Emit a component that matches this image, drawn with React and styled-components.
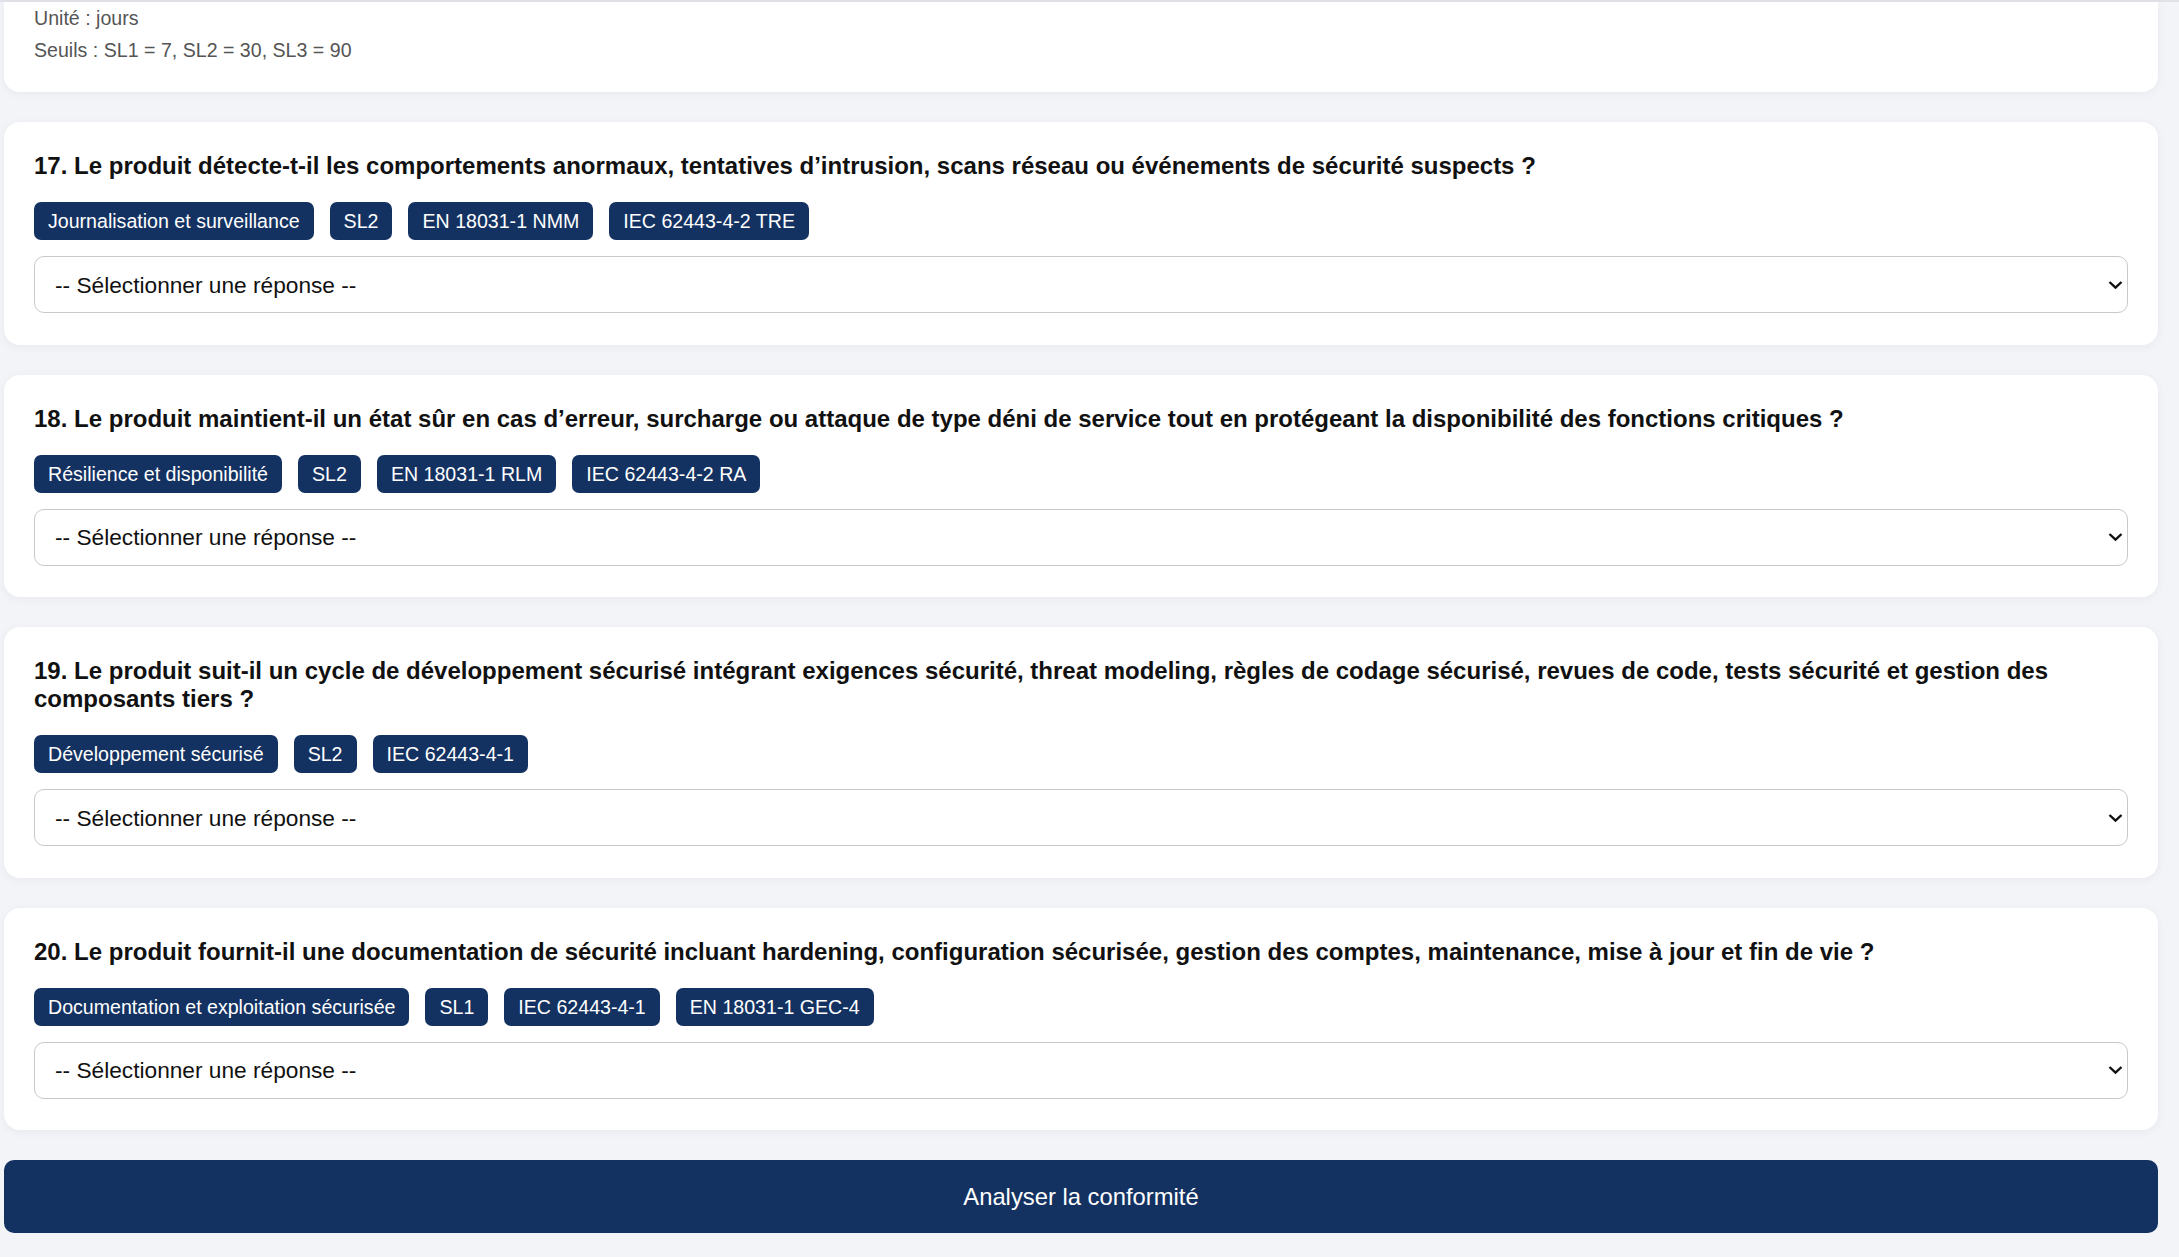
import React from 'react'
import styled, { createGlobalStyle } from 'styled-components'

const GlobalStyle = createGlobalStyle`
  html, body {
    margin: 0;
    padding: 0;
    height: 100%;
    overflow: hidden;
    background: #f3f4f8;
    font-family: 'Liberation Sans', Arial, sans-serif;
  }
`

const Page = styled.div`
  display: flex;
  flex-direction: column;
  gap: 30px;
  padding: 0 21px 0 4px;
  border-top: 2px solid #e0e2e7;
`

const Card = styled.section`
  background: #fff;
  border-radius: ${(p) => (p.cut ? '0 0 16px 16px' : '16px')};
  box-shadow: 0 2px 10px rgba(20, 30, 60, 0.05);
  padding: ${(p) => (p.cut ? '0 30px 26px' : '30px 30px 31.5px')};
`

const Meta = styled.div`
  color: #555;
  font-size: 19.6px;
  line-height: 32px;
`

const Title = styled.h3`
  margin: 0 0 22px;
  font-size: 24px;
  line-height: 28px;
  font-weight: 700;
  color: #111;
`

const Tags = styled.div`
  display: flex;
  flex-wrap: wrap;
  gap: 16px;
  margin-bottom: 16px;
`

const Tag = styled.span`
  background: #143261;
  color: #fff;
  font-size: 19.6px;
  line-height: 22px;
  padding: 8px 14px;
  border-radius: 7px;
`

const SelectWrap = styled.div`
  position: relative;

  svg {
    position: absolute;
    right: 5px;
    top: 50%;
    transform: translateY(-50%);
    pointer-events: none;
  }
`

const Select = styled.select`
  appearance: none;
  width: 100%;
  height: 57px;
  box-sizing: border-box;
  border: 1px solid #c9c9c9;
  border-radius: 10px;
  background: #fff;
  padding: 0 40px 0 20px;
  font-family: 'Liberation Sans', Arial, sans-serif;
  font-size: 22.7px;
  color: #111;
  outline: 0;
`

const Button = styled.button`
  width: 100%;
  height: 73px;
  border: 0;
  border-radius: 10px;
  background: #143261;
  color: #fff;
  font-family: 'Liberation Sans', Arial, sans-serif;
  font-size: 23.8px;
  cursor: pointer;
`

const questions = [
  {
    n: 17,
    text: 'Le produit détecte-t-il les comportements anormaux, tentatives d’intrusion, scans réseau ou événements de sécurité suspects ?',
    tags: ['Journalisation et surveillance', 'SL2', 'EN 18031-1 NMM', 'IEC 62443-4-2 TRE'],
  },
  {
    n: 18,
    text: 'Le produit maintient-il un état sûr en cas d’erreur, surcharge ou attaque de type déni de service tout en protégeant la disponibilité des fonctions critiques ?',
    tags: ['Résilience et disponibilité', 'SL2', 'EN 18031-1 RLM', 'IEC 62443-4-2 RA'],
  },
  {
    n: 19,
    text: 'Le produit suit-il un cycle de développement sécurisé intégrant exigences sécurité, threat modeling, règles de codage sécurisé, revues de code, tests sécurité et gestion des composants tiers ?',
    tags: ['Développement sécurisé', 'SL2', 'IEC 62443-4-1'],
  },
  {
    n: 20,
    text: 'Le produit fournit-il une documentation de sécurité incluant hardening, configuration sécurisée, gestion des comptes, maintenance, mise à jour et fin de vie ?',
    tags: ['Documentation et exploitation sécurisée', 'SL1', 'IEC 62443-4-1', 'EN 18031-1 GEC-4'],
  },
]

const Chevron = () => (
  <svg width="15" height="9" viewBox="0 0 15 9" fill="none">
    <path d="M1.5 1.5 L7.5 7.2 L13.5 1.5" stroke="#111" strokeWidth="2.4" />
  </svg>
)

const Question = ({ q }) => (
  <Card>
    <Title>
      {q.n}. {q.text}
    </Title>
    <Tags>
      {q.tags.map((t) => (
        <Tag key={t}>{t}</Tag>
      ))}
    </Tags>
    <SelectWrap>
      <Select defaultValue="">
        <option value="">-- Sélectionner une réponse --</option>
        <option value="oui">Oui</option>
        <option value="partiel">Partiellement</option>
        <option value="non">Non</option>
      </Select>
      <Chevron />
    </SelectWrap>
  </Card>
)

export default function App() {
  return (
    <>
      <GlobalStyle />
      <Page>
        <Card cut>
          <Meta>Unité : jours</Meta>
          <Meta>Seuils : SL1 = 7, SL2 = 30, SL3 = 90</Meta>
        </Card>
        {questions.map((q) => (
          <Question key={q.n} q={q} />
        ))}
        <Button>Analyser la conformité</Button>
      </Page>
    </>
  )
}
